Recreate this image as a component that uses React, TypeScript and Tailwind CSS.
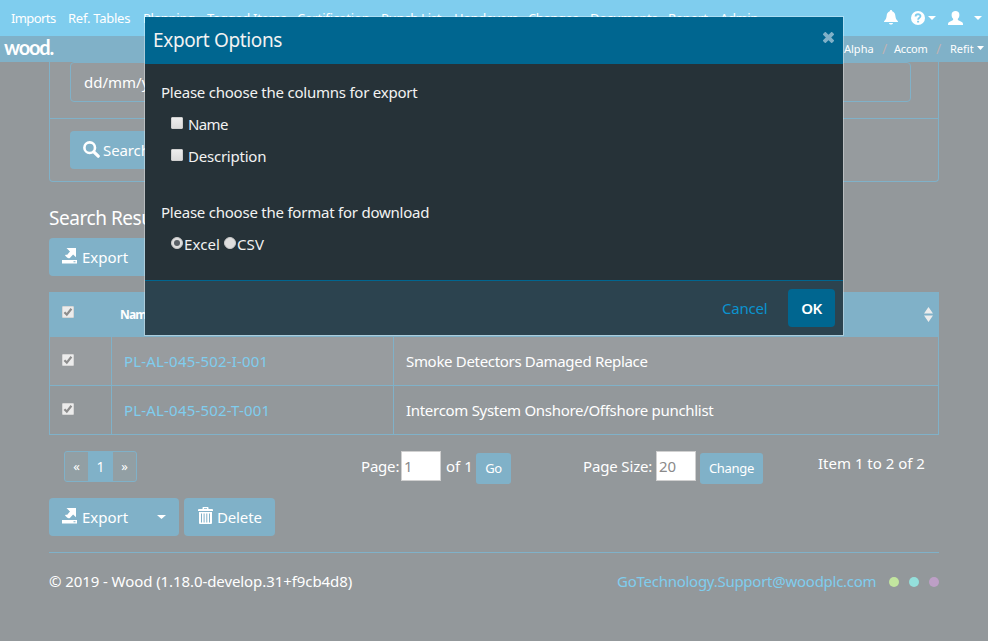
import React from "react";

type IconProps = { className?: string };

const navItems = [
  { label: "Imports", width: "w-[57px] tracking-[-0.6px]" },
  { label: "Ref. Tables", width: "w-[75px] tracking-[-0.25px]" },
  { label: "Planning", width: "w-[64px] tracking-[-0.25px]" },
  { label: "Tagged Items", width: "w-[90px] tracking-[-0.3px]" },
  { label: "Certification", width: "w-[84px] tracking-[-0.12px]" },
  { label: "Punch List", width: "w-[73px] tracking-[-0.25px]" },
  { label: "Handovers", width: "w-[74px] tracking-[-0.25px]" },
  { label: "Changes", width: "w-[62px] tracking-[-0.4px]" },
  { label: "Documents", width: "w-[78px] tracking-[-0.3px]" },
  { label: "Report", width: "w-[52px] tracking-[-0.3px]" },
  { label: "Admin", width: "w-[40px] tracking-[-0.4px]" },
];

const rows = [
  { name: "PL-AL-045-502-I-001", description: "Smoke Detectors Damaged Replace", bg: "bg-[#989c9f]", tracking: "tracking-[-0.32px]" },
  { name: "PL-AL-045-502-T-001", description: "Intercom System Onshore/Offshore punchlist", bg: "bg-[#93989b]", tracking: "tracking-[-0.3px]" },
];

function ExportIcon({ className = "" }: IconProps) {
  return (
    <svg className={className} width="15" height="16" viewBox="0 0 15 16" fill="currentColor">
      <path d="M4.5 0H14v9.300l-2.900-2.800-3 3.200c-1 1-2.200.6-3-.2L3 7.400l1-1 1 .6 3-3.400zM0 12h15v3.600H0zM11.500 13.200v1h2v-1z" fillRule="evenodd" />
    </svg>
  );
}

function TrashIcon({ className = "" }: IconProps) {
  return (
    <svg className={className} width="15" height="17" viewBox="0 0 15 17" fill="currentColor">
      <path fillRule="evenodd" d="M4.500 2V.8Q4.500 0 5.300 0H9.700Q10.500 0 10.500.8V2H14q1 0 1 1v1H0V3q0-1 1-1zM6 1.200V2h3v-.8zM1 5h13v11q0 1-1 1H2q-1 0-1-1zM3 6.500V15.500h1V6.500zM5.600 6.500V15.500h1V6.500zM8.300 6.500V15.500h1V6.500zM11 6.500V15.500h1V6.500z" />
    </svg>
  );
}

function SearchIcon({ className = "" }: IconProps) {
  return (
    <svg className={className} width="17" height="17" viewBox="0 0 17 17" fill="none" stroke="currentColor">
      <circle cx="6.700" cy="6.700" r="5.300" strokeWidth="2.600" />
      <path d="M10.800 10.800L15.200 15.200" strokeWidth="3.200" strokeLinecap="round" />
    </svg>
  );
}

function BellIcon() {
  return (
    <svg width="14" height="15" viewBox="0 0 14 15" fill="currentColor">
      <path d="M7 0c.9 0 1.200.6 1.200 1.300 2.100.7 2.900 2.300 3.100 4.200.3 2.800.9 4 2.200 5.200.4.400.5.800.5 1.300H0c0-.5.1-.9.5-1.300 1.300-1.200 1.900-2.400 2.200-5.200.2-1.900 1-3.500 3.100-4.200C5.800.6 6.100 0 7 0zM5 13h4c-.2 1-1 1.500-2 1.500S5.200 14 5 13z" />
    </svg>
  );
}

function HelpIcon() {
  return (
    <svg width="14" height="14" viewBox="0 0 14 14">
      <circle cx="7" cy="7" r="7" fill="currentColor" />
      <path d="M4.600 5.400C4.600 2.600 9.500 2.600 9.500 5.100 9.500 6.900 7.100 6.600 7.100 8.800" fill="none" stroke="#7fcdee" strokeWidth="1.800" />
      <path d="M6.100 9.800h2v1.700h-2z" fill="#7fcdee" />
    </svg>
  );
}

function UserIcon() {
  return (
    <svg width="15" height="14" viewBox="0 0 15 14" fill="currentColor">
      <path d="M7.500 0C9.700 0 11.400 1.300 11.400 3.700c0 1.800-.6 3.300-1.500 4.100-.3.800 0 1.400.9 1.800l3 1.500c.8.400 1.200 1 1.200 1.800V14H0v-1.100c0-.8.4-1.400 1.200-1.800l3-1.500c.9-.4 1.200-1 .9-1.800C4.200 7 3.600 5.500 3.600 3.700 3.600 1.300 5.300 0 7.500 0z" />
    </svg>
  );
}

function Caret({ className = "w-2" }: IconProps) {
  return (
    <svg className={`${className} h-1 shrink-0`} viewBox="0 0 8 4" preserveAspectRatio="none" fill="currentColor">
      <path d="M0 0h8L4 4z" />
    </svg>
  );
}

function CheckedBox() {
  return (
    <span className="flex h-3 w-3 items-center justify-center rounded-[1px] border border-[#d6d6d6] bg-[#ececec]">
      <svg width="10" height="10" viewBox="0 0 10 10" fill="none" stroke="#8d8d8d" strokeWidth="2.200">
        <path d="M1.400 5.200L3.800 7.600L8.400 1.800" />
      </svg>
    </span>
  );
}

function EmptyBox() {
  return <span className="h-3 w-3 rounded-[1px] border border-[#cfcfcf] bg-gradient-to-b from-[#ededed] to-[#dcdcdc]" />;
}

function Radio({ checked = false }: { checked?: boolean }) {
  return (
    <span className="flex h-3 w-3 items-center justify-center rounded-full border border-[#c9c9c9] bg-[#dedede]">
      {checked && <span className="h-[6px] w-[6px] rounded-full bg-[#5a6066]" />}
    </span>
  );
}

function TopBar() {
  return (
    <header className="h-[62px] text-white">
      <nav className="flex h-9 bg-[#7fcdee] pl-[11px] text-[13px] leading-9">
        {navItems.map((item) => (
          <span key={item.label} className={`${item.width} shrink-0 whitespace-nowrap`}>{item.label}</span>
        ))}
        <div className="flex h-[35px] items-center pl-[124px]">
          <BellIcon />
          <span className="ml-[12.500px] flex items-center gap-[3px]">
            <HelpIcon />
            <Caret />
          </span>
          <span className="ml-[12px] flex items-center gap-[11px]">
            <UserIcon />
            <Caret />
          </span>
        </div>
      </nav>
      <div className="flex h-[26px] justify-between bg-[#80b1c8] pl-1">
        <span className="font-[Lato] text-[20px] leading-[23px] font-bold tracking-[-1.2px]">wood.</span>
        <div className="flex w-[144px] text-[11px] leading-[26px] whitespace-nowrap">
          <span className="w-[38px]">Alpha</span>
          <span className="w-[12px] text-[14px] text-[#bdb3b4]">/</span>
          <span className="w-[42px] tracking-[-0.2px]">Accom</span>
          <span className="w-[14px] text-[14px] text-[#bdb3b4]">/</span>
          <span className="w-[27px]">Refit</span>
          <Caret className="mt-[10px] w-[7px]" />
        </div>
      </div>
    </header>
  );
}

function SearchPanel() {
  return (
    <section className="h-[120px] rounded-b border border-t-0 border-[#80b1c8] bg-[#969b9e]">
      <div className="h-[57px] border-b border-[#80b1c8] pl-5">
        <div className="h-10 w-[841px] rounded border border-[#80b1c8] pl-[13px] text-[15px] leading-[39px]">dd/mm/yyyy</div>
      </div>
      <div className="pt-3 pl-5">
        <button className="flex h-[38px] w-[92px] items-center rounded bg-[#80b1c8] pl-[13px] text-[15px]">
          <SearchIcon className="-mt-[2px]" />
          <span className="ml-[3px] tracking-[-0.1px]">Search</span>
        </button>
      </div>
    </section>
  );
}

function ExportButton() {
  return (
    <button className="flex h-[38px] w-[130px] items-center rounded bg-[#80b1c8] pl-[13px] text-[15px]">
      <ExportIcon className="-mt-[3px]" />
      <span className="ml-[5px] w-[75px] text-left">Export</span>
      <Caret className="w-[9px]" />
    </button>
  );
}

function ResultsTable() {
  return (
    <div className="mt-4">
      <div className="flex h-[45px] bg-[#80b1c8] pl-[13px]">
        <span className="mt-[14px] w-[58px]"><CheckedBox /></span>
        <span className="text-[12px] leading-[45px] font-bold tracking-[-0.8px]">Name</span>
        <svg className="mt-[15px] mr-[6px] ml-auto" width="9" height="15" viewBox="0 0 9 15" fill="#ececec">
          <path d="M0 6.500L4.500 0 9 6.500zM0 8.500L4.500 15 9 8.500z" />
        </svg>
      </div>
      {rows.map((row) => (
        <div key={row.name} className={`flex h-[49px] border-x border-b border-[#80b1c8] ${row.bg} text-[15px] leading-[49px] whitespace-nowrap`}>
          <div className="w-[62px] border-r border-[#80b1c8] pt-[17px] pl-3"><CheckedBox /></div>
          <div className="w-[282px] border-r border-[#80b1c8] pl-3 tracking-[0.18px] text-[#7fcdee]">{row.name}</div>
          <div className={`pl-3 ${row.tracking}`}>{row.description}</div>
        </div>
      ))}
    </div>
  );
}

function Pager() {
  return (
    <div className="mt-4 flex h-[47px] text-[15px] leading-[31px] whitespace-nowrap">
      <div className="ml-[15px] flex h-[31px] w-[73px] overflow-hidden rounded-[3px] border border-[#80b1c8] bg-[#929fa4] text-center text-[13px] leading-[29px]">
        <span className="w-[23px]">«</span>
        <span className="w-[25px] bg-[#80b1c8] text-[14px]">1</span>
        <span className="w-[23px]">»</span>
      </div>
      <span className="ml-[224px] w-10 tracking-[-0.2px]">Page:</span>
      <span className="h-[30px] w-10 border border-[#d0d0d0] bg-white pl-[2px] leading-[29px] text-[#8a8a8a]">1</span>
      <span className="ml-[5px] w-[30px]">of 1</span>
      <button className="mt-[2px] h-[31px] w-[35px] rounded-[3px] bg-[#80b1c8] text-[13px] tracking-[-0.3px]">Go</button>
      <span className="ml-[72px] w-[73px] tracking-[-0.15px]">Page Size:</span>
      <span className="h-[30px] w-10 border border-[#d0d0d0] bg-white pl-[2px] leading-[29px] text-[#8a8a8a]">20</span>
      <button className="mt-[2px] ml-1 h-[31px] w-[63px] rounded-[3px] bg-[#80b1c8] text-[13px] tracking-[-0.3px]">Change</button>
      <span className="ml-[55px] leading-[25px]">Item 1 to 2 of 2</span>
    </div>
  );
}

function Footer() {
  return (
    <footer className="mt-4 flex h-[58px] justify-between border-t border-[#80b1c8] text-[15px] leading-[57px] whitespace-nowrap">
      <span className="tracking-[-0.08px]">© 2019 - Wood (1.18.0-develop.31+f9cb4d8)</span>
      <div className="flex w-[322px]">
        <span className="w-[272px] tracking-[-0.26px] text-[#7fcdee]">GoTechnology.Support@woodplc.com</span>
        <span className="mt-6 flex gap-[10px]">
          <span className="h-[10px] w-[10px] rounded-full bg-[#c2e59f]" />
          <span className="h-[10px] w-[10px] rounded-full bg-[#94dfdb]" />
          <span className="h-[10px] w-[10px] rounded-full bg-[#bd9fc6]" />
        </span>
      </div>
    </footer>
  );
}

function ExportDialog() {
  return (
    <div role="dialog" className="absolute top-4 left-36 w-[700px] border border-white/35 text-[15px] tracking-[-0.23px] whitespace-nowrap text-[#f2f2f2]">
      <div className="flex h-[47px] justify-between bg-[#006690] pr-[9px] pl-2">
        <h4 className="text-[19px] leading-[47px] tracking-[-0.36px]">Export Options</h4>
        <svg className="mt-[15px]" width="11" height="11" viewBox="0 0 11 11" stroke="#80b1c8" strokeWidth="3.800">
          <path d="M1 1L10 10M10 1L1 10" />
        </svg>
      </div>
      <div className="h-[216px] bg-[#263238] pt-3 pl-4 leading-8">
        <p>Please choose the columns for export</p>
        <label className="flex items-center gap-[5px] pl-[10px] tracking-[-0.6px]"><span className="-mt-[3px] flex"><EmptyBox /></span>Name</label>
        <label className="flex items-center gap-[5px] pl-[10px]"><span className="-mt-[3px] flex"><EmptyBox /></span>Description</label>
        <p className="mt-6">Please choose the format for download</p>
        <div className="flex items-center pl-[10px] tracking-[0.1px]">
          <span className="-mt-[3px]"><Radio checked /></span>
          <span className="ml-[1px] w-10">Excel</span>
          <span className="-mt-[3px]"><Radio /></span>
          <span className="ml-[1px]">CSV</span>
        </div>
      </div>
      <div className="flex h-[55px] justify-end border-t border-[#006690] bg-[#2c434f] pt-2 pr-2 leading-[38px]">
        <span className="w-[66px] text-[#0a93d0]">Cancel</span>
        <button className="h-[38px] w-[47px] rounded bg-[#006690] font-semibold tracking-[-0.5px] text-white">OK</button>
      </div>
    </div>
  );
}

export default function App() {
  return (
    <div className="relative h-[641px] w-[988px] overflow-hidden bg-[#93989b] font-['Noto_Sans',sans-serif] text-white">
      <TopBar />
      <main className="mx-[49px] w-[890px]">
        <SearchPanel />
        <h3 className="mt-5 h-9 text-[19px] leading-[32px] tracking-[-0.45px]">Search Results</h3>
        <ExportButton />
        <ResultsTable />
        <Pager />
        <div className="flex gap-[5px]">
          <ExportButton />
          <button className="flex h-[38px] w-[91px] items-center rounded bg-[#80b1c8] pl-[14px] text-[15px]">
            <TrashIcon className="-mt-[3px]" />
            <span className="ml-1 tracking-[-0.15px]">Delete</span>
          </button>
        </div>
        <Footer />
      </main>
      <ExportDialog />
    </div>
  );
}
